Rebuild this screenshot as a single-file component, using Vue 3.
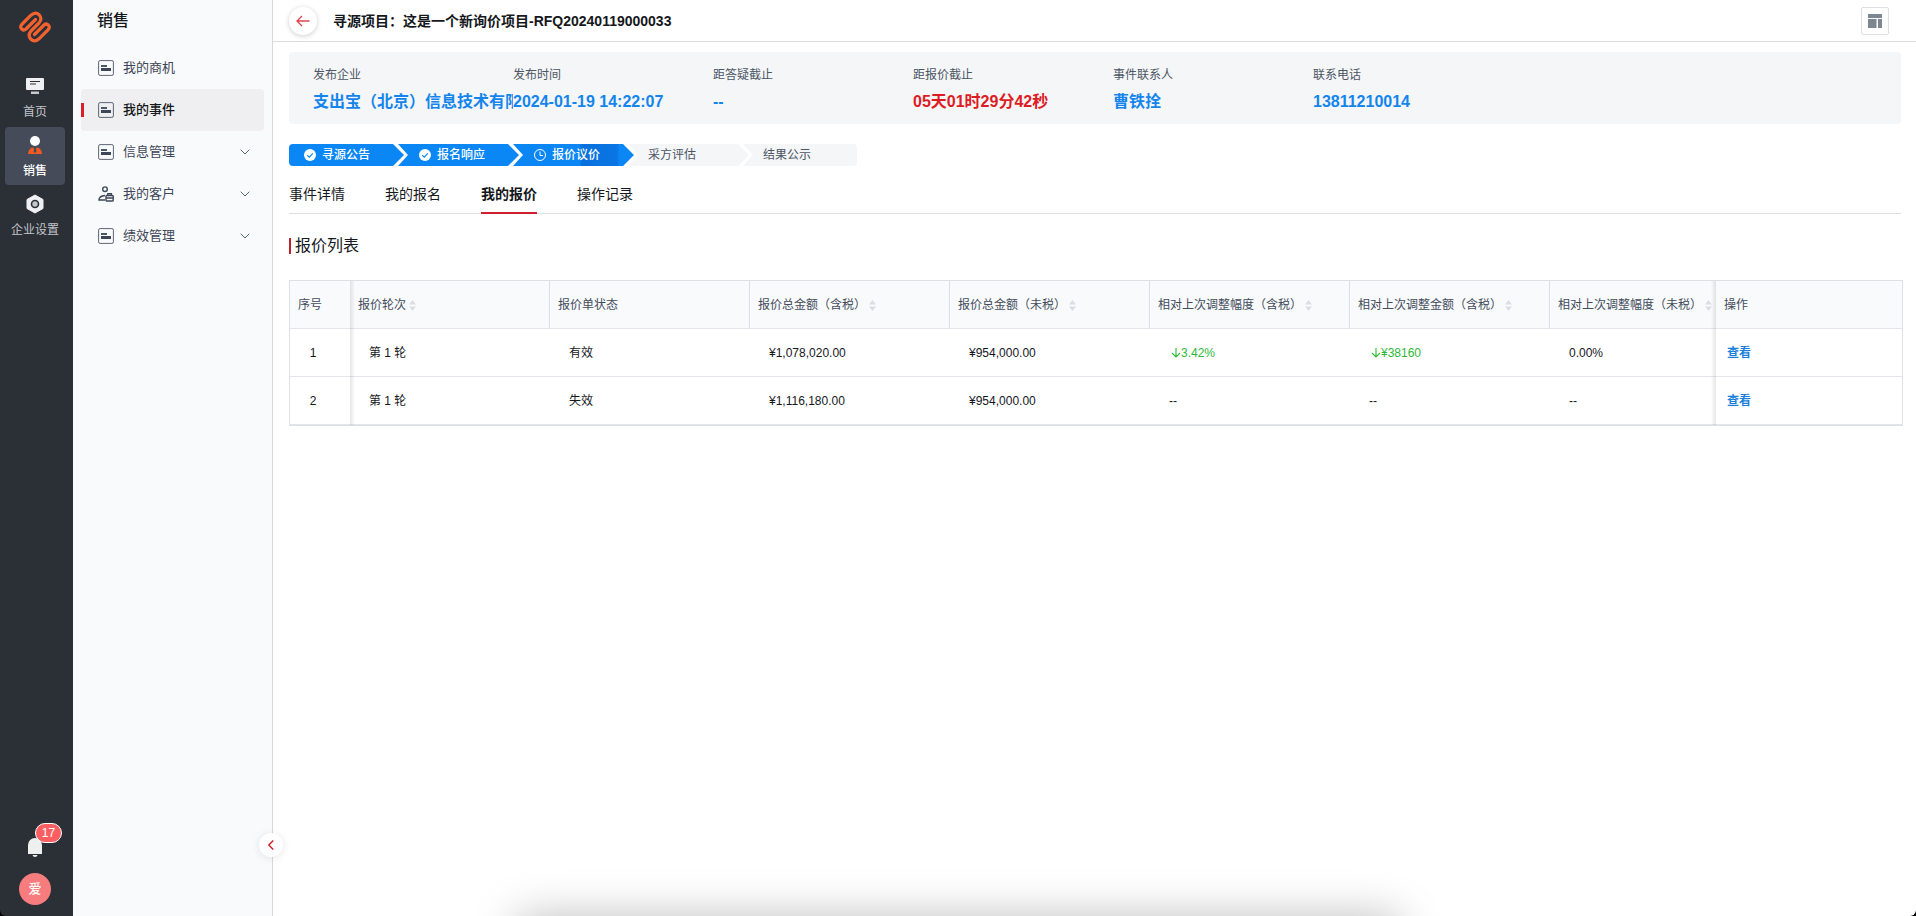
<script setup>
import { ref } from 'vue'

const menu = [
  { label: '我的商机', icon: 'card' },
  { label: '我的事件', icon: 'card', active: true },
  { label: '信息管理', icon: 'card', expandable: true },
  { label: '我的客户', icon: 'client', expandable: true },
  { label: '绩效管理', icon: 'card', expandable: true },
]

const facts = [
  { label: '发布企业', value: '支出宝（北京）信息技术有限公司' },
  { label: '发布时间', value: '2024-01-19 14:22:07' },
  { label: '距答疑截止', value: '--' },
  { label: '距报价截止', value: '05天01时29分42秒', urgent: true },
  { label: '事件联系人', value: '曹铁拴' },
  { label: '联系电话', value: '13811210014' },
]

const steps = [
  { label: '寻源公告', state: 'done' },
  { label: '报名响应', state: 'done' },
  { label: '报价议价', state: 'current' },
  { label: '采方评估', state: 'todo' },
  { label: '结果公示', state: 'todo' },
]

const tabs = ['事件详情', '我的报名', '我的报价', '操作记录']
const activeTab = ref('我的报价')

const columns = [
  { label: '序号', cls: 'c-index' },
  { label: '报价轮次', sortable: true },
  { label: '报价单状态' },
  { label: '报价总金额（含税）', sortable: true },
  { label: '报价总金额（未税）', sortable: true },
  { label: '相对上次调整幅度（含税）', sortable: true },
  { label: '相对上次调整金额（含税）', sortable: true },
  { label: '相对上次调整幅度（未税）', sortable: true, cls: 'c-last' },
  { label: '操作', cls: 'c-action' },
]

const rows = [
  { id: 1, round: '第 1 轮', status: '有效', gross: '¥1,078,020.00', net: '¥954,000.00', changes: ['3.42%', '¥38160'], netRate: '0.00%', down: true },
  { id: 2, round: '第 1 轮', status: '失效', gross: '¥1,116,180.00', net: '¥954,000.00', changes: ['--', '--'], netRate: '--', down: false },
]
</script>

<template>
  <div class="shell">
    <nav class="rail" aria-label="主导航">
      <svg class="logo" viewBox="0 0 32 32" aria-hidden="true">
        <path
          d="M16.500 8.500L7 18Q4.800 20 2.700 18Q.7 15.800 2.700 13.500L12 4.200Q16.500.2 20.300 4Q23.600 7.800 20 12L12 20Q8.400 24.200 11.700 28Q15.500 31.800 20 27.800L29.300 18.500Q31.300 16.200 29.300 14Q27.200 12 25 14L15.500 23.500"
          fill="none"
          stroke="#f2622e"
          stroke-width="3.200"
          stroke-linecap="round"
          stroke-linejoin="round"
        />
      </svg>
      <a class="rail-item" href="#">
        <svg viewBox="0 0 20 20" aria-hidden="true">
          <rect x="1" y="2" width="18" height="12" rx="1" fill="#eef0f3" />
          <path d="M5 5.500h10M5 8h6" stroke="#2b2f36" stroke-width="1.200" />
          <rect x="6" y="15.500" width="8" height="2.500" fill="#c8cacd" />
        </svg>
        <span>首页</span>
      </a>
      <a class="rail-item is-active" href="#">
        <svg viewBox="0 0 20 20" aria-hidden="true">
          <circle cx="10" cy="6" r="5" fill="#fff" />
          <path d="M3 19q.5-6 5-6.500l2 2 2-2q4.500.5 5 6.500z" fill="#f2581f" />
          <path d="M9.200 13.500h1.600l.7 3-1.500 1.500-1.500-1.500z" fill="#454b58" />
        </svg>
        <span>销售</span>
      </a>
      <a class="rail-item" href="#">
        <svg viewBox="0 0 20 20" aria-hidden="true">
          <path d="M10 1l8 4.500v9L10 19l-8-4.500v-9z" fill="#eef0f3" stroke="#eef0f3" stroke-linejoin="round" />
          <circle cx="10" cy="10" r="3.500" fill="#c3c6cb" stroke="#2b2f36" stroke-width="1.600" />
        </svg>
        <span>企业设置</span>
      </a>
      <div class="rail-foot">
        <button class="bell" type="button" aria-label="通知">
          <svg viewBox="0 0 14 19" aria-hidden="true">
            <path d="M0 16V7a7 7 0 0 1 14 0v9z" fill="#eef0f0" />
            <path d="M4.500 17h5q-.5 2-2.500 2t-2.500-2z" fill="#eef0f0" />
          </svg>
          <span class="badge">17</span>
        </button>
        <button class="avatar" type="button">爱</button>
      </div>
    </nav>

    <aside class="side">
      <h2>销售</h2>
      <a v-for="m in menu" :key="m.label" href="#" class="menu-item" :class="{ 'is-active': m.active }">
        <svg v-if="m.icon === 'card'" class="menu-icon" viewBox="0 0 16 16" aria-hidden="true">
          <rect x=".6" y=".6" width="14.800" height="14.800" rx="1.500" fill="none" stroke="#5d6674" />
          <path d="M3 6h6" stroke="#4e5766" stroke-width="2" />
          <path d="M3 9.500h10" stroke="#3d4757" stroke-width="3" />
        </svg>
        <svg v-else class="menu-icon" viewBox="0 0 16 16" aria-hidden="true">
          <g fill="none" stroke="#3d4757" stroke-width="1.400">
            <circle cx="7" cy="3.200" r="2.300" />
            <path d="M7 14H1q0-4 6-4.500" />
            <rect x="8" y="9.500" width="7.200" height="5.500" rx=".8" />
            <path d="M9.800 9.500V7.800h3.600v1.700M8 12h7" />
          </g>
        </svg>
        <span>{{ m.label }}</span>
        <svg v-if="m.expandable" class="chev" viewBox="0 0 10 6" aria-hidden="true">
          <path d="M.7.7 5 5 9.300.7" fill="none" stroke="#596373" />
        </svg>
      </a>
      <button class="collapse" type="button" aria-label="收起菜单">
        <svg viewBox="0 0 6 10" aria-hidden="true"><path d="M5.300.5.800 5l4.500 4.500" fill="none" stroke="#cf1f2c" stroke-width="1.400" /></svg>
      </button>
    </aside>

    <main class="main">
      <header class="top">
        <button class="back" type="button" aria-label="返回">
          <svg viewBox="0 0 14 12" aria-hidden="true"><path d="M13.500 6H1M6 1 1 6l5 5" fill="none" stroke="#e0444e" stroke-width="1.300" /></svg>
        </button>
        <h1>寻源项目：这是一个新询价项目-RFQ20240119000033</h1>
        <button class="layout-btn" type="button" aria-label="布局">
          <svg viewBox="0 0 14 14" aria-hidden="true"><path d="M0 0h14v4H0zM0 5h8.500v9H0zM10 5h4v9h-4z" fill="#7c8792" /></svg>
        </button>
      </header>

      <div class="content">
        <dl class="facts">
          <div v-for="f in facts" :key="f.label" class="fact">
            <dt>{{ f.label }}</dt>
            <dd :class="{ urgent: f.urgent }">{{ f.value }}</dd>
          </div>
        </dl>

        <ol class="steps">
          <li v-for="s in steps" :key="s.label" :class="s.state">
            <svg v-if="s.state === 'done'" viewBox="0 0 12 12" aria-hidden="true">
              <circle cx="6" cy="6" r="6" fill="#fff" />
              <path d="M3.300 6.200 5.300 8.100 8.800 4.300" fill="none" stroke="#0a86f5" stroke-width="1.200" />
            </svg>
            <svg v-else-if="s.state === 'current'" viewBox="0 0 12 12" aria-hidden="true">
              <circle cx="6" cy="6" r="5.500" fill="none" stroke="#fff" />
              <path d="M6 2.500V6.500H9" fill="none" stroke="#fff" />
            </svg>
            <span>{{ s.label }}</span>
          </li>
        </ol>

        <div class="tabs" role="tablist">
          <button
            v-for="t in tabs"
            :key="t"
            type="button"
            role="tab"
            :aria-selected="t === activeTab"
            :class="{ 'is-active': t === activeTab }"
            @click="activeTab = t"
          >{{ t }}</button>
        </div>

        <h3 class="section">报价列表</h3>

        <div class="table-box">
          <table>
            <colgroup>
              <col class="w-index" />
              <col v-for="n in 6" :key="n" class="w-std" />
              <col class="w-last" />
              <col />
            </colgroup>
            <thead>
              <tr>
                <th v-for="c in columns" :key="c.label" :class="c.cls" scope="col">
                  <span class="th-in">
                    {{ c.label }}
                    <svg v-if="c.sortable" viewBox="0 0 7 11" aria-hidden="true"><path d="M3.500 0 7 4.500H0zM0 6.500h7L3.500 11z" fill="#dcdee2" /></svg>
                  </span>
                </th>
              </tr>
            </thead>
            <tbody>
              <tr v-for="r in rows" :key="r.id">
                <td class="c-index">{{ r.id }}</td>
                <td>{{ r.round }}</td>
                <td>{{ r.status }}</td>
                <td>{{ r.gross }}</td>
                <td>{{ r.net }}</td>
                <td v-for="(v, i) in r.changes" :key="i">
                  <span :class="{ down: r.down }">
                    <svg v-if="r.down" viewBox="0 0 10 10" aria-hidden="true"><path d="M5 0v9M1 5l4 4 4-4" fill="none" stroke="#2fb939" stroke-width="1.100" /></svg>{{ v }}
                  </span>
                </td>
                <td class="c-last">{{ r.netRate }}</td>
                <td class="c-action"><a href="#">查看</a></td>
              </tr>
            </tbody>
          </table>
        </div>
      </div>
    </main>
    <div class="dock-shadow"></div>
  </div>
</template>

<style>
html,
body {
  margin: 0;
  background: #000;
}
</style>

<style scoped>
.shell {
  position: relative;
  display: flex;
  min-height: 100vh;
  overflow: hidden;
  font-family: "Liberation Sans", "Noto Sans CJK SC", sans-serif;
  font-size: 12px;
  line-height: 20px;
  color: #15181c;
}
.shell * {
  box-sizing: border-box;
}
a {
  text-decoration: none;
}
button {
  padding: 0;
  border: 0;
  background: none;
  font: inherit;
  color: inherit;
  cursor: pointer;
}
svg {
  display: block;
  flex: none;
}
h1,
h2,
h3,
dl,
dd,
ol {
  margin: 0;
  padding: 0;
}

.rail {
  width: 73px;
  flex: none;
  display: flex;
  flex-direction: column;
  gap: 1px;
  padding: 11px 8px 11px 5px;
  background: #2b2f36;
  border-bottom-left-radius: 6px;
}
.logo {
  width: 32px;
  height: 32px;
  align-self: center;
  margin-bottom: 24px;
}
.rail-item {
  height: 58px;
  display: flex;
  flex-direction: column;
  align-items: center;
  gap: 6px;
  padding-top: 8px;
  border-radius: 4px;
  color: #c3c5c9;
  white-space: nowrap;
}
.rail-item svg {
  width: 20px;
  height: 20px;
}
.rail-item.is-active {
  background: #454b58;
  color: #fff;
  font-weight: 500;
}
.rail-foot {
  margin-top: auto;
  display: flex;
  flex-direction: column;
  align-items: center;
  gap: 16px;
}
.bell {
  position: relative;
}
.bell svg {
  width: 14px;
  height: 19px;
}
.badge {
  position: absolute;
  left: 7px;
  bottom: 14px;
  min-width: 27px;
  height: 20px;
  border: 1px solid #fff;
  border-radius: 10px;
  background: #fb5f62;
  color: #fff;
  line-height: 18px;
}
.avatar {
  width: 32px;
  height: 32px;
  border-radius: 50%;
  background: #f67c7d;
  color: #fff;
  font-size: 13px;
  font-weight: 500;
}

.side {
  position: relative;
  width: 200px;
  flex: none;
  padding: 0 8px;
  border-right: 1px solid #d5d8df;
  background: #f9fafc;
}
.side h2 {
  height: 47px;
  padding-left: 16px;
  font-size: 16px;
  font-weight: 500;
  line-height: 42px;
}
.menu-item {
  height: 42px;
  display: flex;
  align-items: center;
  gap: 9px;
  padding: 0 14px 0 17px;
  border-radius: 4px;
  color: #3d4656;
  font-size: 13px;
}
.menu-item.is-active {
  padding-left: 0;
  background: #efeff1;
  color: #15171a;
  font-weight: 500;
}
.menu-item.is-active::before {
  content: "";
  width: 3px;
  height: 14px;
  margin-right: 5px;
  background: #d81e28;
}
.menu-icon {
  width: 16px;
  height: 16px;
}
.chev {
  width: 10px;
  height: 6px;
  margin-left: auto;
}
.collapse {
  position: absolute;
  right: -11px;
  bottom: 59px;
  z-index: 2;
  width: 24px;
  height: 24px;
  display: grid;
  place-items: center;
  border-radius: 50%;
  background: #fff;
  box-shadow: 0 1px 8px rgba(0, 0, 0, 0.1);
}
.collapse svg {
  width: 6px;
  height: 10px;
}

.main {
  flex: 1;
  min-width: 0;
  background: #fff;
  border-bottom-right-radius: 6px;
}
.top {
  height: 42px;
  display: flex;
  align-items: center;
  padding: 0 27px 0 16px;
  border-bottom: 1px solid #dadce0;
}
.back {
  width: 28px;
  height: 28px;
  display: grid;
  place-items: center;
  border-radius: 50%;
  background: #fff;
  box-shadow: 0 1px 5px rgba(0, 0, 0, 0.2);
}
.back svg {
  width: 14px;
  height: 12px;
}
.top h1 {
  margin-left: 16px;
  font-size: 14px;
  font-weight: 600;
}
.layout-btn {
  width: 28px;
  height: 28px;
  margin-left: auto;
  display: grid;
  place-items: center;
  border: 1px solid #dcdfe3;
  border-radius: 2px;
}
.layout-btn svg {
  width: 14px;
  height: 14px;
}

.content {
  padding: 10px 13px 0 16px;
}
.facts {
  display: flex;
  margin-right: 2px;
  padding: 13px 24px 11px;
  border-radius: 4px;
  background: #f5f6f8;
}
.fact {
  width: 200px;
  white-space: nowrap;
}
.fact dt {
  color: #4b5563;
}
.fact dd {
  height: 28px;
  overflow: hidden;
  color: #1485ec;
  font-size: 16px;
  font-weight: 700;
  line-height: 34px;
}
.fact dd.urgent {
  color: #de1c23;
}

.steps {
  display: flex;
  margin-top: 20px;
  list-style: none;
}
.steps li {
  width: 121px;
  height: 22px;
  display: flex;
  align-items: center;
  gap: 6px;
  margin-left: -6px;
  padding-left: 21px;
  background: #0a86f5;
  color: #fff;
  font-weight: 500;
  clip-path: polygon(0 0, calc(100% - 11px) 0, 100% 50%, calc(100% - 11px) 100%, 0 100%, 10px 50%);
}
.steps li:first-child {
  width: 115px;
  margin-left: 0;
  padding-left: 15px;
  border-radius: 4px 0 0 4px;
  clip-path: polygon(0 0, calc(100% - 11px) 0, 100% 50%, calc(100% - 11px) 100%, 0 100%);
}
.steps li:last-child {
  width: 114px;
  border-radius: 0 4px 4px 0;
  clip-path: polygon(0 0, 100% 0, 100% 100%, 0 100%, 10px 50%);
}
.steps li.current {
  background: linear-gradient(90deg, #0a86f5 55%, #0870dc 57%, #0a76e4 86%, #0a86f5 88%);
}
.steps li.todo {
  padding-left: 20px;
  background: #f5f6f8;
  color: #4b5563;
  font-weight: 400;
}
.steps svg {
  width: 12px;
  height: 12px;
}

.tabs {
  display: flex;
  gap: 40px;
  margin: 7px 2px 0 0;
  box-shadow: inset 0 -1px #dddfe3;
}
.tabs button {
  height: 41px;
  padding-top: 2px;
  font-size: 14px;
  border-bottom: 2px solid transparent;
}
.tabs .is-active {
  border-bottom-color: #cf1f2f;
  font-weight: 600;
}

.section {
  display: flex;
  align-items: center;
  gap: 4px;
  margin: 22px 0 24px;
  font-size: 16px;
  font-weight: 400;
}
.section::before {
  content: "";
  width: 2px;
  height: 16px;
  background: #c0202c;
}

.table-box {
  border: 1px solid #dcdfe4;
  overflow: hidden;
}
table {
  width: 100%;
  table-layout: fixed;
  border-collapse: separate;
  border-spacing: 0;
}
.w-index {
  width: 60px;
}
.w-std {
  width: 200px;
}
.w-last {
  width: 166px;
}
th,
td {
  height: 48px;
  padding: 1px 0 0 19px;
  border-bottom: 1px solid #e4e6eb;
  text-align: left;
  font-weight: 400;
  white-space: nowrap;
}
th {
  padding-left: 8px;
  border-right: 1px solid #dcdfe4;
  background: #f9fafc;
  color: #434c5b;
}
td.c-index {
  padding: 1px 14px 0 0;
  text-align: center;
}
.c-index,
.c-action {
  position: relative;
  border-right: 0;
}
.c-last {
  border-right: 0;
}
.c-index::after,
.c-action::before {
  content: "";
  position: absolute;
  top: 0;
  bottom: -1px;
  width: 5px;
}
.c-index::after {
  left: 100%;
  background: linear-gradient(90deg, rgba(0, 0, 0, 0.1), rgba(0, 0, 0, 0));
}
.c-action::before {
  right: 100%;
  background: linear-gradient(270deg, rgba(0, 0, 0, 0.1), rgba(0, 0, 0, 0));
}
td.c-action {
  padding-left: 11px;
}
.c-action a {
  color: #1b7fdb;
  font-weight: 700;
}
.th-in {
  display: flex;
  align-items: center;
  gap: 3px;
}
.th-in svg {
  width: 7px;
  height: 11px;
}
.down {
  display: flex;
  align-items: center;
  color: #2fb939;
  padding-left: 2px;
}
.down svg {
  width: 10px;
  height: 10px;
}

.dock-shadow {
  position: absolute;
  top: 100%;
  left: 27%;
  right: 27%;
  height: 80px;
  box-shadow: 0 0 44px rgba(0, 0, 0, 0.25);
}
</style>
